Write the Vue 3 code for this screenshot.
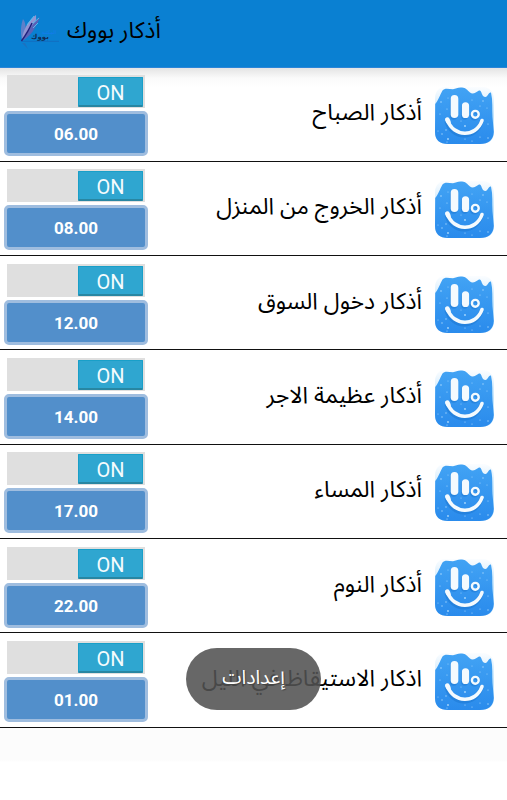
<template>
  <div class="screen">
    <header class="app-bar">
      <svg class="logo" width="40" height="42" viewBox="0 0 40 42">
        <path d="M7 30C5 22 6 15 8 9C12 14 11 23 7 30Z" fill="#5e80ca" />
        <path d="M7 31C7 22 13 10 21 5C22 14 18 22 7 31Z" fill="#9295d3" />
        <path d="M7 31C15 27 21 18 25 7C19 11 14 20 7 31Z" fill="#5a62b8" />
        <path d="M12 15L19 6M17 14L24 8M18 18L23 13" stroke="#56c4ef" stroke-width=".9" />
        <path d="M6.5 31C10 26 14 20 17 13" fill="none" stroke="#20207c" stroke-width="1.5" />
        <path d="M6 31.3H44" stroke="#1765b7" stroke-width=".7" />
        <path d="M7 33L13 39L10 33Z" fill="#2869b6" opacity=".65" />
        <text x="25" y="29" class="logo-text">بووك</text>
        <text x="34" y="23.5" class="logo-small">المكتبة</text>
      </svg>
      <h1 class="title" dir="rtl">أذكار بووك</h1>
    </header>

    <main class="list">
      <section v-for="item in items" :key="item.time" class="row">
        <div class="controls">
          <div class="switch"><span class="thumb">ON</span></div>
          <button class="time">{{ item.time }}</button>
        </div>
        <span class="label" dir="rtl">{{ item.name }}</span>
        <svg class="icon" width="60" height="62" viewBox="0 0 60 62">
          <defs>
            <linearGradient id="ice" x1="0" y1="0" x2="0" y2="1">
              <stop offset="0" stop-color="#42a3f4" />
              <stop offset="1" stop-color="#2a8bec" />
            </linearGradient>
            <linearGradient id="snow" x1="0" y1="0" x2="0" y2="1">
              <stop offset="0" stop-color="#fbfdff" />
              <stop offset="0.5" stop-color="#c4e5fb" />
            </linearGradient>
          </defs>
          <path d="M9 2H51Q60 4 60 16V47Q60 59 46 59H14Q1 59 1 47V14Q1 4 9 2Z" fill="url(#snow)" />
          <path d="M1.2 19C4 16 6 10 8.5 5.5C10.500 2.500 15 4 19 4.200C22 4 24 2 28 2.600C32 3 33 5 36 7.500C39 10 42 7 45 5.500C48 4.500 47 11 51 12C54 12.500 54 7 57 7.500C59 16 58 24 58.500 32L59.800 47Q59 59 46 59H14Q1 59 1 47Z" fill="url(#ice)" />
          <g fill="none" stroke="#1a73cc" stroke-linecap="round" opacity=".45" transform="translate(-.8 1.4)">
            <path d="M20.5 14V29.5" stroke-width="7.6" />
            <path d="M31.5 21V29.7" stroke-width="7.2" />
            <circle cx="41.3" cy="29.5" r="3.6" stroke-width="2.2" />
            <path d="M13.5 35.5C19 53 42 54 48 36" stroke-width="4.2" />
          </g>
          <g fill="none" stroke="#f4fafe" stroke-linecap="round">
            <path d="M20.5 13.8V29.2" stroke-width="7.6" />
            <path d="M31.5 20.8V29.4" stroke-width="7.2" />
            <circle cx="41.3" cy="29.3" r="3.4" stroke-width="2.4" />
            <path d="M13.5 35C19 52 42 53 48 35.5" stroke-width="3.6" />
            <path d="M13.3 34.6L14.5 37" stroke-width="4.6" />
          </g>
          <g fill="#a9d8fd">
            <circle v-for="(dot, i) in flakes" :key="i" :cx="dot[0]" :cy="dot[1]" :r="dot[2]" />
          </g>
        </svg>
      </section>
    </main>

    <div class="toast" dir="rtl">إعدادات</div>
  </div>
</template>

<script setup>
const items = [
  { name: 'أذكار الصباح', time: '06.00' },
  { name: 'أذكار الخروج من المنزل', time: '08.00' },
  { name: 'أذكار دخول السوق', time: '12.00' },
  { name: 'أذكار عظيمة الاجر', time: '14.00' },
  { name: 'أذكار المساء', time: '17.00' },
  { name: 'أذكار النوم', time: '22.00' },
  { name: 'اذكار الاستيقاظ في الليل', time: '01.00' },
]

const flakes = [
  [7, 17, 0.8], [14, 13, 0.5], [6, 29, 0.6], [13, 24, 0.6],
  [38, 15, 0.5], [49, 16, 0.7], [46, 21, 0.6], [53, 23, 0.5],
  [31, 41, 0.9], [27, 36, 0.5], [54, 39, 0.6], [4, 46, 0.5],
  [8, 49, 0.7], [14, 54, 0.9], [12, 45, 0.7], [31, 54, 0.6],
  [13, 57, 0.6], [38, 56, 0.6], [46, 52, 0.6], [54, 53, 0.7],
]
</script>

<style>
body {
  margin: 0;
}
</style>

<style scoped>
.screen {
  position: relative;
  width: 507px;
  height: 800px;
  overflow: hidden;
  background: linear-gradient(#e2e2e2 67px, #fafafa 78px, #fff 88px, #fff 727px, #fcfcfc 729px, #fcfcfc 760px, #fff 762px);
  font-family: Roboto, 'DejaVu Sans', sans-serif;
}

.app-bar {
  box-sizing: border-box;
  display: flex;
  height: 67.6px;
  padding: 10px 0 0 15px;
  background: #0a80d2;
  border-bottom: 1px solid #2b85d8;
}

.logo {
  overflow: visible;
}

.logo-text {
  font: bold 7px 'DejaVu Sans', sans-serif;
  text-anchor: middle;
  fill: #102c55;
}

.logo-small {
  font: 5px 'DejaVu Sans', sans-serif;
  text-anchor: middle;
  fill: #167cf0;
}

.title {
  margin: 0 0 0 12px;
  font: 22.8px/43px 'Noto Sans Arabic', 'DejaVu Sans', sans-serif;
  white-space: nowrap;
}

.row {
  box-sizing: border-box;
  display: flex;
  align-items: flex-start;
  height: 94.3px;
  padding: 7.5px 12px 0 4px;
  border-bottom: 1.4px solid #111;
}

.controls {
  flex: none;
  width: 144px;
}

.switch {
  box-sizing: border-box;
  display: flex;
  justify-content: flex-end;
  width: 138px;
  height: 33px;
  margin-left: 3px;
  padding: 2px;
  background: #dfdfdf;
}

.thumb {
  box-sizing: border-box;
  width: 65px;
  height: 30px;
  border: 1px solid #199fc8;
  border-bottom: 2px solid #2886a2;
  border-radius: 1px;
  background: #2fa6d0;
  color: #f4fbfd;
  font-size: 20px;
  line-height: 30px;
  text-align: center;
}

.time {
  box-sizing: border-box;
  display: block;
  width: 144px;
  height: 45px;
  margin: 3px 0 0;
  padding: 1px 0 0;
  border: 3px solid #9fbddf;
  border-radius: 5px;
  background: #528fcb;
  color: #fff;
  font: bold 17px Roboto, sans-serif;
}

.label {
  flex: 1;
  margin-right: 12px;
  padding-top: 15px;
  color: #000;
  font: 23px/46px 'Noto Sans Arabic', 'DejaVu Sans', sans-serif;
  text-align: right;
  white-space: nowrap;
}

.icon {
  flex: none;
  margin: 10px 1px 0 0;
}

.toast {
  position: absolute;
  left: 186px;
  top: 648px;
  width: 135px;
  height: 62px;
  border-radius: 31px;
  background: rgba(82, 82, 82, 0.88);
  color: #fff;
  font: 19.5px/60px 'Noto Sans Arabic', 'DejaVu Sans', sans-serif;
  text-align: center;
  text-shadow: 1px 1px 1px #444;
}
</style>
